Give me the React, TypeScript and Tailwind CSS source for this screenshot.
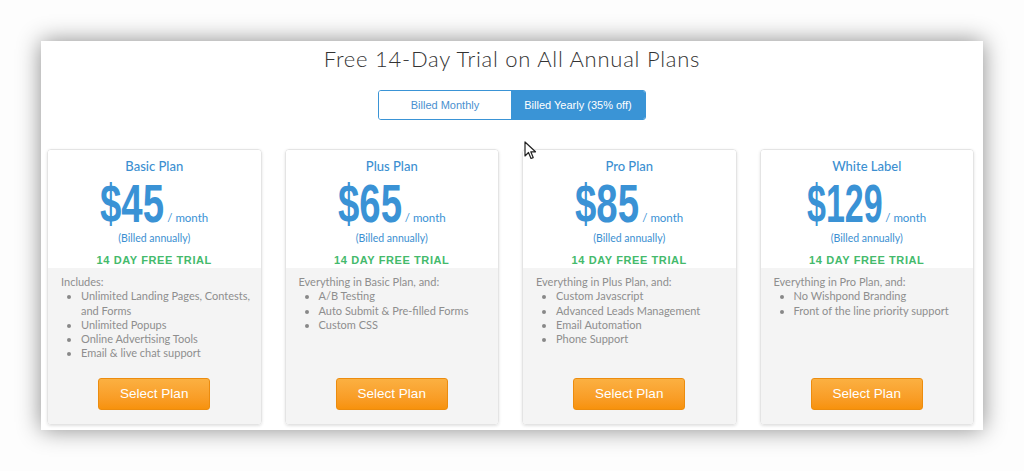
import React from 'react';

type Plan = {
  name: string;
  price: string;
  box: string;
  squeeze: string;
  lead: string;
  items: string[];
};

const plans: Plan[] = [
  {
    name: 'Basic Plan',
    price: '$45',
    box: 'w-[64px]',
    squeeze: 'scale-x-[0.71]',
    lead: 'Includes:',
    items: ['Unlimited Landing Pages, Contests, and Forms', 'Unlimited Popups', 'Online Advertising Tools', 'Email & live chat support'],
  },
  {
    name: 'Plus Plan',
    price: '$65',
    box: 'w-[64px]',
    squeeze: 'scale-x-[0.71]',
    lead: 'Everything in Basic Plan, and:',
    items: ['A/B Testing', 'Auto Submit & Pre-filled Forms', 'Custom CSS'],
  },
  {
    name: 'Pro Plan',
    price: '$85',
    box: 'w-[64px]',
    squeeze: 'scale-x-[0.71]',
    lead: 'Everything in Plus Plan, and:',
    items: ['Custom Javascript', 'Advanced Leads Management', 'Email Automation', 'Phone Support'],
  },
  {
    name: 'White Label',
    price: '$129',
    box: 'w-[75px]',
    squeeze: 'scale-x-[0.63]',
    lead: 'Everything in Pro Plan, and:',
    items: ['No Wishpond Branding', 'Front of the line priority support'],
  },
];

function PlanCard({ plan }: { plan: Plan }) {
  return (
    <div className="flex flex-col rounded-[4px] border border-[#e4e4e4] shadow-[0_1px_3px_rgba(0,0,0,0.12)] overflow-hidden">
      {/* price header */}
      <div className="bg-white flex flex-col items-center pt-[8px] pb-[1px]">
        <div className="font-['Lato',sans-serif] font-medium text-[13px] leading-[16px] text-[#3c8fd1]">{plan.name}</div>
        <div className="mt-[2px] flex items-baseline text-[#3a92d5]">
          <span className={`inline-block ${plan.box} h-[54px]`}>
            <span className={`inline-block origin-left ${plan.squeeze} whitespace-nowrap font-['Liberation_Sans',sans-serif] font-bold text-[54px] leading-none`}>
              {plan.price}
            </span>
          </span>
          <span className="ml-[3px] font-['Lato',sans-serif] text-[11.5px] leading-none">/ month</span>
        </div>
        <div className="mt-[1px] font-['Lato',sans-serif] text-[10.5px] leading-[14px] text-[#3c8fd1]">(Billed annually)</div>
        <div className="mt-[8px] font-['Liberation_Sans',sans-serif] font-bold text-[11px] leading-[14px] tracking-[0.6px] text-[#44ba6c]">
          14 DAY FREE TRIAL
        </div>
      </div>

      {/* features */}
      <div className="flex-1 flex flex-col bg-[#f4f4f4] pl-[13px] pr-[6px] pt-[7px] pb-[14px]">
        <div className="flex-1 font-['Lato',sans-serif] text-[11px] leading-[14.3px] text-[#8e8e8e]">
          <div>{plan.lead}</div>
          <ul className="list-disc pl-[20px] marker:text-[#888]">
            {plan.items.map((it) => (
              <li key={it}>{it}</li>
            ))}
          </ul>
        </div>
        <div className="flex justify-center pr-[7px]">
          <button className="w-[112px] h-[32px] rounded-[3px] border border-[#ec8c0e] bg-gradient-to-b from-[#fbb041] to-[#f7920b] font-['Liberation_Sans',sans-serif] text-[13.5px] text-white">
            Select Plan
          </button>
        </div>
      </div>
    </div>
  );
}

export default function App() {
  return (
    <div className="relative w-[1024px] h-[471px] bg-[#fdfdfd] pt-[41px] pl-[41px] overflow-hidden">
      <div className="w-[942px] h-[389px] bg-white shadow-[0_0_22px_rgba(0,0,0,0.45)] flex flex-col">
        <h1 className="mt-[5px] text-center font-['Lato',sans-serif] font-light text-[22px] leading-[26px] tracking-[0.75px] text-[#333]">
          Free 14-Day Trial on All Annual Plans
        </h1>

        <div className="mt-[18px] flex justify-center">
          <div className="flex h-[30px] rounded-[3px] border border-[#3a94d6] overflow-hidden font-['Liberation_Sans',sans-serif] text-[11px]">
            <button className="w-[132px] bg-white text-[#4a90cf]">Billed Monthly</button>
            <button className="w-[134px] bg-[#3a94d6] text-white">Billed Yearly (35% off)</button>
          </div>
        </div>

        <div className="mt-[29px] grid grid-cols-4 gap-[23px] pl-[6px] pr-[9px] h-[276px]">
          {plans.map((p) => (
            <PlanCard key={p.name} plan={p} />
          ))}
        </div>
      </div>

      {/* mouse pointer */}
      <svg className="absolute left-[524px] top-[141px]" width="13" height="19" viewBox="0 0 13 19">
        <path d="M1 1 L1 15 L4.5 11.5 L7 17.5 L9.2 16.6 L6.8 10.8 L11.5 10.8 Z" fill="#fff" stroke="#222" strokeWidth="1.2" strokeLinejoin="round" />
      </svg>
    </div>
  );
}
